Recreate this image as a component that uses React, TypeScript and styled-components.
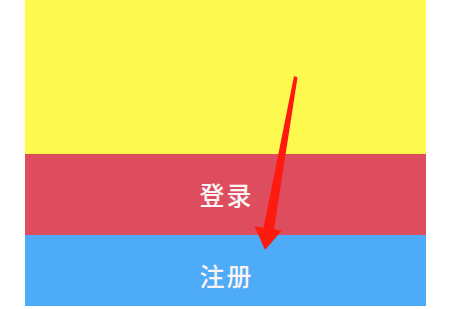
import styled, { createGlobalStyle } from "styled-components";

const GlobalStyle = createGlobalStyle`
  html, body {
    margin: 0;
    padding: 0;
    background: #fff;
  }
  body {
    font-family: "Noto Sans CJK SC", "Noto Sans", sans-serif;
  }
`;

const App = () => {
  return (
    <>
      <GlobalStyle />
      <Page>
        <Screen>
          <Banner />
          <ActionButton $bg="#de4d5e" $offset={-2}>
            登录
          </ActionButton>
          <ActionButton $bg="#4eabf8" $height={71} $offset={8}>
            注册
          </ActionButton>
          <Arrow viewBox="0 0 470 309" width="470" height="309">
            <polygon
              points="294,76 297.5,77.5 274,229 281.5,231 265,250 254.5,226 263.5,228"
              fill="#ff1a10"
            />
          </Arrow>
        </Screen>
      </Page>
    </>
  );
};

export default App;

const Page = styled.div`
  width: 470px;
  height: 309px;
  padding-left: 25px;
  box-sizing: border-box;
  position: relative;
`;

const Screen = styled.div`
  width: 401px;
  display: flex;
  flex-direction: column;
`;

const Banner = styled.div`
  height: 154px;
  background-color: #fef94f;
`;

const ActionButton = styled.div<{ $bg: string; $height?: number; $offset?: number }>`
  height: ${({ $height }) => $height ?? 81}px;
  padding-top: ${({ $offset }) => Math.max($offset ?? 0, 0)}px;
  padding-bottom: ${({ $offset }) => Math.max(-($offset ?? 0), 0)}px;
  box-sizing: border-box;
  background-color: ${({ $bg }) => $bg};
  display: flex;
  align-items: center;
  justify-content: center;
  color: #fbf4f4;
  font-size: 25px;
  font-weight: 500;
  letter-spacing: 2px;
  text-indent: 2px;
`;

const Arrow = styled.svg`
  position: absolute;
  left: 0;
  top: 0;
  pointer-events: none;
`;
